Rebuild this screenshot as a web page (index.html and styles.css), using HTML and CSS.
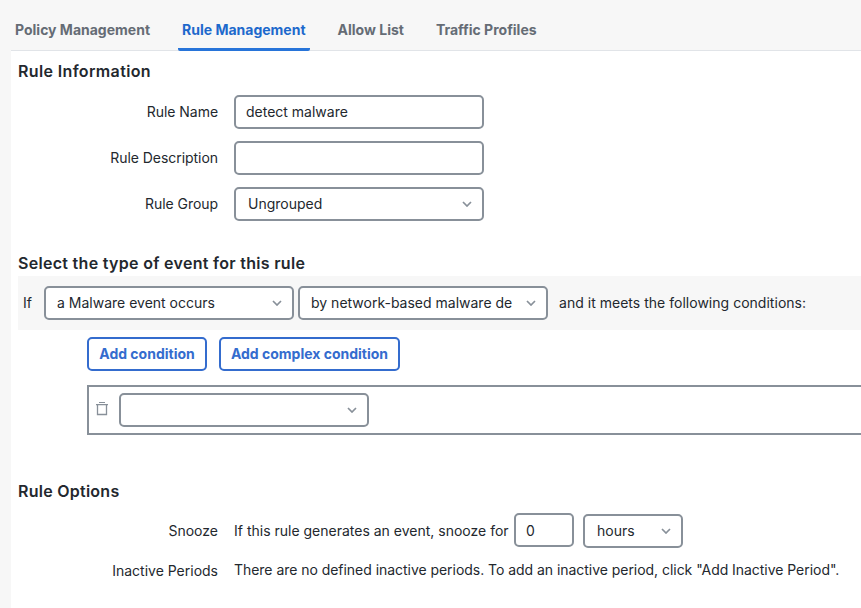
FILE: index.html
```html
<!DOCTYPE html>
<html lang="en">
<head>
<meta charset="utf-8">
<title>Rule Management</title>
<link rel="stylesheet" href="styles.css">
</head>
<body>
<svg class="defs" width="0" height="0" aria-hidden="true">
  <symbol id="chevron" viewBox="0 0 10 6"><path d="M1 1l4 4 4-4" fill="none" stroke="currentColor" stroke-width="1.7"/></symbol>
</svg>
<nav class="tabs">
  <a class="tab">Policy Management</a>
  <a class="tab active">Rule Management</a>
  <a class="tab">Allow List</a>
  <a class="tab">Traffic Profiles</a>
</nav>
<main class="panel">
  <h2 class="info-title">Rule Information</h2>
  <section class="fields">
    <div class="row"><span class="label">Rule Name</span><div class="control">detect malware</div></div>
    <div class="row"><span class="label">Rule Description</span><div class="control"></div></div>
    <div class="row"><span class="label">Rule Group</span><div class="control select"><span class="value">Ungrouped</span><svg class="chevron"><use href="#chevron"/></svg></div></div>
  </section>

  <h2 class="event-title">Select the type of event for this rule</h2>
  <section class="event">
    <span class="if">If</span>
    <div class="control select"><span class="value">a Malware event occurs</span><svg class="chevron"><use href="#chevron"/></svg></div>
    <div class="control select"><span class="value">by network-based malware de</span><svg class="chevron"><use href="#chevron"/></svg></div>
    <span class="meets">and it meets the following conditions:</span>
  </section>
  <div class="actions">
    <button class="simple">Add condition</button>
    <button class="complex">Add complex condition</button>
  </div>
  <div class="condition">
    <svg class="trash" viewBox="0 0 12 15"><path d="M3 1.5h6M0 3.7h12" stroke="currentColor" stroke-width="1.2"/><path d="M1.5 4v9.5h9V4" fill="none" stroke="currentColor" stroke-width="1.3"/></svg>
    <div class="control select"><span class="value"></span><svg class="chevron"><use href="#chevron"/></svg></div>
  </div>

  <h2 class="options-title">Rule Options</h2>
  <div class="row snooze">
    <span class="label">Snooze</span>
    <span class="snooze-text">If this rule generates an event, snooze for</span>
    <div class="control number">0</div>
    <div class="control select unit"><span class="value">hours</span><svg class="chevron"><use href="#chevron"/></svg></div>
  </div>
  <div class="row inactive">
    <span class="label">Inactive Periods</span>
    <span class="inactive-text">There are no defined inactive periods. To add an inactive period, click "Add Inactive Period".</span>
  </div>
</main>
</body>
</html>
```

FILE: styles.css
```css
* { box-sizing: border-box; }
body {
  margin: 0;
  height: 608px;
  overflow: hidden;
  background: #f7f7f7;
  color: #23282e;
  font: 14px/20px Inter, "Liberation Sans", sans-serif;
  white-space: nowrap;
}
.defs { display: none; }
.tabs {
  display: flex;
  gap: 24px;
  height: 51px;
  margin-left: 11px;
  border-bottom: 1px solid #e1e4e8;
}
.tab {
  height: 51px;
  padding: 20px 4px 0;
  color: #656c75;
  font-weight: 700;
}
.tab.active {
  color: #1d69cc;
  border-bottom: 3px solid #2774d9;
  border-radius: 0 0 2px 2px;
}
.panel {
  height: 557px;
  margin-left: 11px;
  padding: 8px 0 0 7px;
  background: #fff;
}
h2 {
  margin: 0;
  font-size: 16px;
  line-height: 24px;
  font-weight: 600;
  letter-spacing: 0.3px;
}
.info-title { letter-spacing: 0.36px; }
.fields {
  display: flex;
  flex-direction: column;
  gap: 12px;
  margin-top: 12px;
}
.row { display: flex; align-items: center; }
.label { width: 200px; margin-right: 16px; text-align: right; }
.fields .label { letter-spacing: -0.05px; }
.control {
  display: flex;
  align-items: center;
  flex: none;
  width: 250px;
  height: 34px;
  padding: 0 10px;
  border: 2px solid #889099;
  border-radius: 5px;
  background: #fff;
}
.select { padding: 0 10px 0 12px; }
.value { flex: 1; }
.chevron { flex: none; width: 10px; height: 6px; color: #889099; }
.event-title { margin-top: 30px; }
.event {
  display: flex;
  align-items: center;
  gap: 4px;
  height: 54px;
  margin-top: 1px;
  padding-left: 5px;
  background: #f7f7f7;
}
.event .select { padding-left: 11px; }
.if { width: 17px; }
.meets { margin-left: 7px; letter-spacing: 0.02px; }
.actions { display: flex; gap: 12px; margin: 7px 0 0 69px; }
button {
  height: 34px;
  padding: 0;
  border: 2px solid #346cce;
  border-radius: 5px;
  background: #fff;
  color: #346cce;
  font: 700 14px/20px Inter, "Liberation Sans", sans-serif;
}
.simple { width: 120px; }
.complex { width: 181px; }
.condition {
  display: flex;
  align-items: center;
  height: 50px;
  margin: 14px 0 0 69px;
  padding-left: 7px;
  border: 2px solid #889099;
  border-right: 0;
}
.trash { width: 12px; height: 15px; margin: -3px 11px 0 0; color: #889099; }
.options-title { margin-top: 44px; letter-spacing: 0.26px; }
.snooze { height: 34px; margin-top: 10px; }
.snooze .label { padding-top: 2px; }
.snooze-text { width: 280px; padding-top: 2px; }
.number { width: 60px; margin-right: 9px; padding-top: 2px; }
.unit { width: 100px; margin-top: 2px; }
.inactive { margin-top: 14px; }
.inactive-text { margin-top: -2px; letter-spacing: -0.04px; }
```
